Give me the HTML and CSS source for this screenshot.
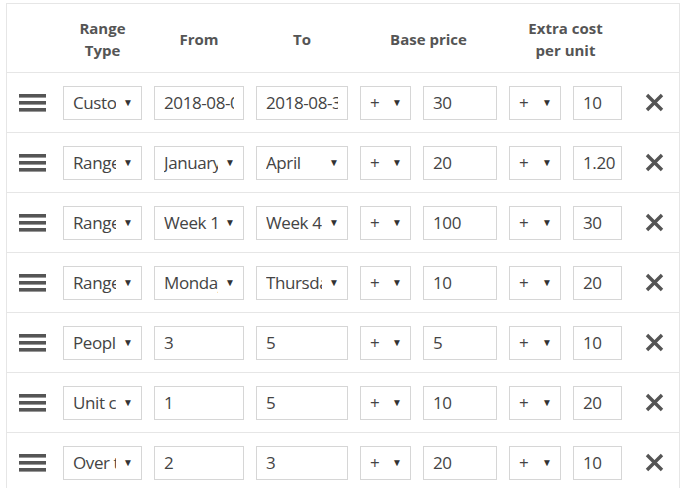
FILE: index.html
```html
<!DOCTYPE html>
<html>
<head>
<meta charset="utf-8">
<link rel="stylesheet" href="styles.css">
</head>
<body>
<div class="table">
  <div class="row head">
    <div class="th c2">Range<br>Type</div>
    <div class="th c3">From</div>
    <div class="th c4">To</div>
    <div class="th c5">Base price</div>
    <div class="th c7">Extra cost<br>per unit</div>
  </div>

  <div class="row">
    <svg class="handle" width="27" height="18" viewBox="0 0 27 18"><rect y="0" width="27" height="3.6"/><rect y="7" width="27" height="3.6"/><rect y="14" width="27" height="3.6"/></svg>
    <div class="sel"><select><option>Custom</option></select><span class="arr">▼</span></div>
    <input class="inp" type="text" value="2018-08-01">
    <input class="inp" type="text" value="2018-08-31">
    <div class="sel"><select><option>+</option></select><span class="arr">▼</span></div>
    <input class="inp" type="text" value="30">
    <div class="sel"><select><option>+</option></select><span class="arr">▼</span></div>
    <input class="inp sm" type="text" value="10">
    <svg class="del" width="19" height="19" viewBox="0 0 19 19"><path d="M2 2 L17 17 M17 2 L2 17"/></svg>
  </div>

  <div class="row">
    <svg class="handle" width="27" height="18" viewBox="0 0 27 18"><rect y="0" width="27" height="3.6"/><rect y="7" width="27" height="3.6"/><rect y="14" width="27" height="3.6"/></svg>
    <div class="sel"><select><option>Range of months</option></select><span class="arr">▼</span></div>
    <div class="sel"><select><option>January</option></select><span class="arr">▼</span></div>
    <div class="sel"><select><option>April</option></select><span class="arr">▼</span></div>
    <div class="sel"><select><option>+</option></select><span class="arr">▼</span></div>
    <input class="inp" type="text" value="20">
    <div class="sel"><select><option>+</option></select><span class="arr">▼</span></div>
    <input class="inp sm" type="text" value="1.20">
    <svg class="del" width="19" height="19" viewBox="0 0 19 19"><path d="M2 2 L17 17 M17 2 L2 17"/></svg>
  </div>

  <div class="row">
    <svg class="handle" width="27" height="18" viewBox="0 0 27 18"><rect y="0" width="27" height="3.6"/><rect y="7" width="27" height="3.6"/><rect y="14" width="27" height="3.6"/></svg>
    <div class="sel"><select><option>Range of weeks</option></select><span class="arr">▼</span></div>
    <div class="sel"><select><option>Week 1</option></select><span class="arr">▼</span></div>
    <div class="sel"><select><option>Week 4</option></select><span class="arr">▼</span></div>
    <div class="sel"><select><option>+</option></select><span class="arr">▼</span></div>
    <input class="inp" type="text" value="100">
    <div class="sel"><select><option>+</option></select><span class="arr">▼</span></div>
    <input class="inp sm" type="text" value="30">
    <svg class="del" width="19" height="19" viewBox="0 0 19 19"><path d="M2 2 L17 17 M17 2 L2 17"/></svg>
  </div>

  <div class="row">
    <svg class="handle" width="27" height="18" viewBox="0 0 27 18"><rect y="0" width="27" height="3.6"/><rect y="7" width="27" height="3.6"/><rect y="14" width="27" height="3.6"/></svg>
    <div class="sel"><select><option>Range of days</option></select><span class="arr">▼</span></div>
    <div class="sel"><select><option>Monday</option></select><span class="arr">▼</span></div>
    <div class="sel"><select><option>Thursday</option></select><span class="arr">▼</span></div>
    <div class="sel"><select><option>+</option></select><span class="arr">▼</span></div>
    <input class="inp" type="text" value="10">
    <div class="sel"><select><option>+</option></select><span class="arr">▼</span></div>
    <input class="inp sm" type="text" value="20">
    <svg class="del" width="19" height="19" viewBox="0 0 19 19"><path d="M2 2 L17 17 M17 2 L2 17"/></svg>
  </div>

  <div class="row">
    <svg class="handle" width="27" height="18" viewBox="0 0 27 18"><rect y="0" width="27" height="3.6"/><rect y="7" width="27" height="3.6"/><rect y="14" width="27" height="3.6"/></svg>
    <div class="sel"><select><option>People</option></select><span class="arr">▼</span></div>
    <input class="inp" type="text" value="3">
    <input class="inp" type="text" value="5">
    <div class="sel"><select><option>+</option></select><span class="arr">▼</span></div>
    <input class="inp" type="text" value="5">
    <div class="sel"><select><option>+</option></select><span class="arr">▼</span></div>
    <input class="inp sm" type="text" value="10">
    <svg class="del" width="19" height="19" viewBox="0 0 19 19"><path d="M2 2 L17 17 M17 2 L2 17"/></svg>
  </div>

  <div class="row">
    <svg class="handle" width="27" height="18" viewBox="0 0 27 18"><rect y="0" width="27" height="3.6"/><rect y="7" width="27" height="3.6"/><rect y="14" width="27" height="3.6"/></svg>
    <div class="sel"><select><option>Unit count</option></select><span class="arr">▼</span></div>
    <input class="inp" type="text" value="1">
    <input class="inp" type="text" value="5">
    <div class="sel"><select><option>+</option></select><span class="arr">▼</span></div>
    <input class="inp" type="text" value="10">
    <div class="sel"><select><option>+</option></select><span class="arr">▼</span></div>
    <input class="inp sm" type="text" value="20">
    <svg class="del" width="19" height="19" viewBox="0 0 19 19"><path d="M2 2 L17 17 M17 2 L2 17"/></svg>
  </div>

  <div class="row">
    <svg class="handle" width="27" height="18" viewBox="0 0 27 18"><rect y="0" width="27" height="3.6"/><rect y="7" width="27" height="3.6"/><rect y="14" width="27" height="3.6"/></svg>
    <div class="sel"><select><option>Over the night</option></select><span class="arr">▼</span></div>
    <input class="inp" type="text" value="2">
    <input class="inp" type="text" value="3">
    <div class="sel"><select><option>+</option></select><span class="arr">▼</span></div>
    <input class="inp" type="text" value="20">
    <div class="sel"><select><option>+</option></select><span class="arr">▼</span></div>
    <input class="inp sm" type="text" value="10">
    <svg class="del" width="19" height="19" viewBox="0 0 19 19"><path d="M2 2 L17 17 M17 2 L2 17"/></svg>
  </div>
</div>
</body>
</html>
```

FILE: styles.css
```css
html, body {
  margin: 0;
  padding: 0;
  background: #fff;
}
body {
  font-family: "Open Sans", "Noto Sans", sans-serif;
  color: #444;
}
.table {
  margin: 3px 0 0 6px;
  width: 674px;
  box-sizing: border-box;
  border: 1px solid #e6e6e6;
  border-bottom: none;
}
.row {
  display: grid;
  grid-template-columns: 44px 79px 90px 92px 51px 74px 52px 49px 1fr;
  column-gap: 12px;
  align-items: center;
  height: 59px;
  border-bottom: 1px solid #e6e6e6;
}
.row.head {
  height: 68px;
}
.th {
  font-weight: 700;
  font-size: 15px;
  line-height: 22px;
  color: #555;
  text-align: center;
  padding-top: 1px;
}
.c2 { grid-column: 2; }
.c3 { grid-column: 3; }
.c4 { grid-column: 4; }
.c5 { grid-column: 5 / span 2; }
.c7 { grid-column: 7 / span 2; }

.handle {
  fill: #555;
  margin-left: 12px;
  display: block;
}
.del {
  stroke: #555;
  stroke-width: 3.4;
  fill: none;
  margin-left: 11px;
  display: block;
}
.sel {
  position: relative;
  height: 34px;
}
.sel select {
  appearance: none;
  -webkit-appearance: none;
  width: 100%;
  height: 34px;
  box-sizing: border-box;
  border: 1px solid #d6d6d6;
  border-radius: 0;
  background: #fff;
  font-family: inherit;
  font-size: 17px;
  letter-spacing: -0.4px;
  color: #444;
  padding: 0 25px 0 9px;
  margin: 0;
  outline: none;
}
.sel .arr {
  position: absolute;
  right: 9px;
  top: 10px;
  font-size: 10px;
  line-height: 12px;
  color: #333;
  pointer-events: none;
}
.inp {
  width: 100%;
  height: 34px;
  box-sizing: border-box;
  border: 1px solid #d6d6d6;
  border-radius: 0;
  background: #fff;
  font-family: inherit;
  font-size: 17px;
  letter-spacing: -0.4px;
  color: #444;
  padding: 0 9px;
  margin: 0;
  outline: none;
}
.inp.sm {
  padding-right: 2px;
}
```
